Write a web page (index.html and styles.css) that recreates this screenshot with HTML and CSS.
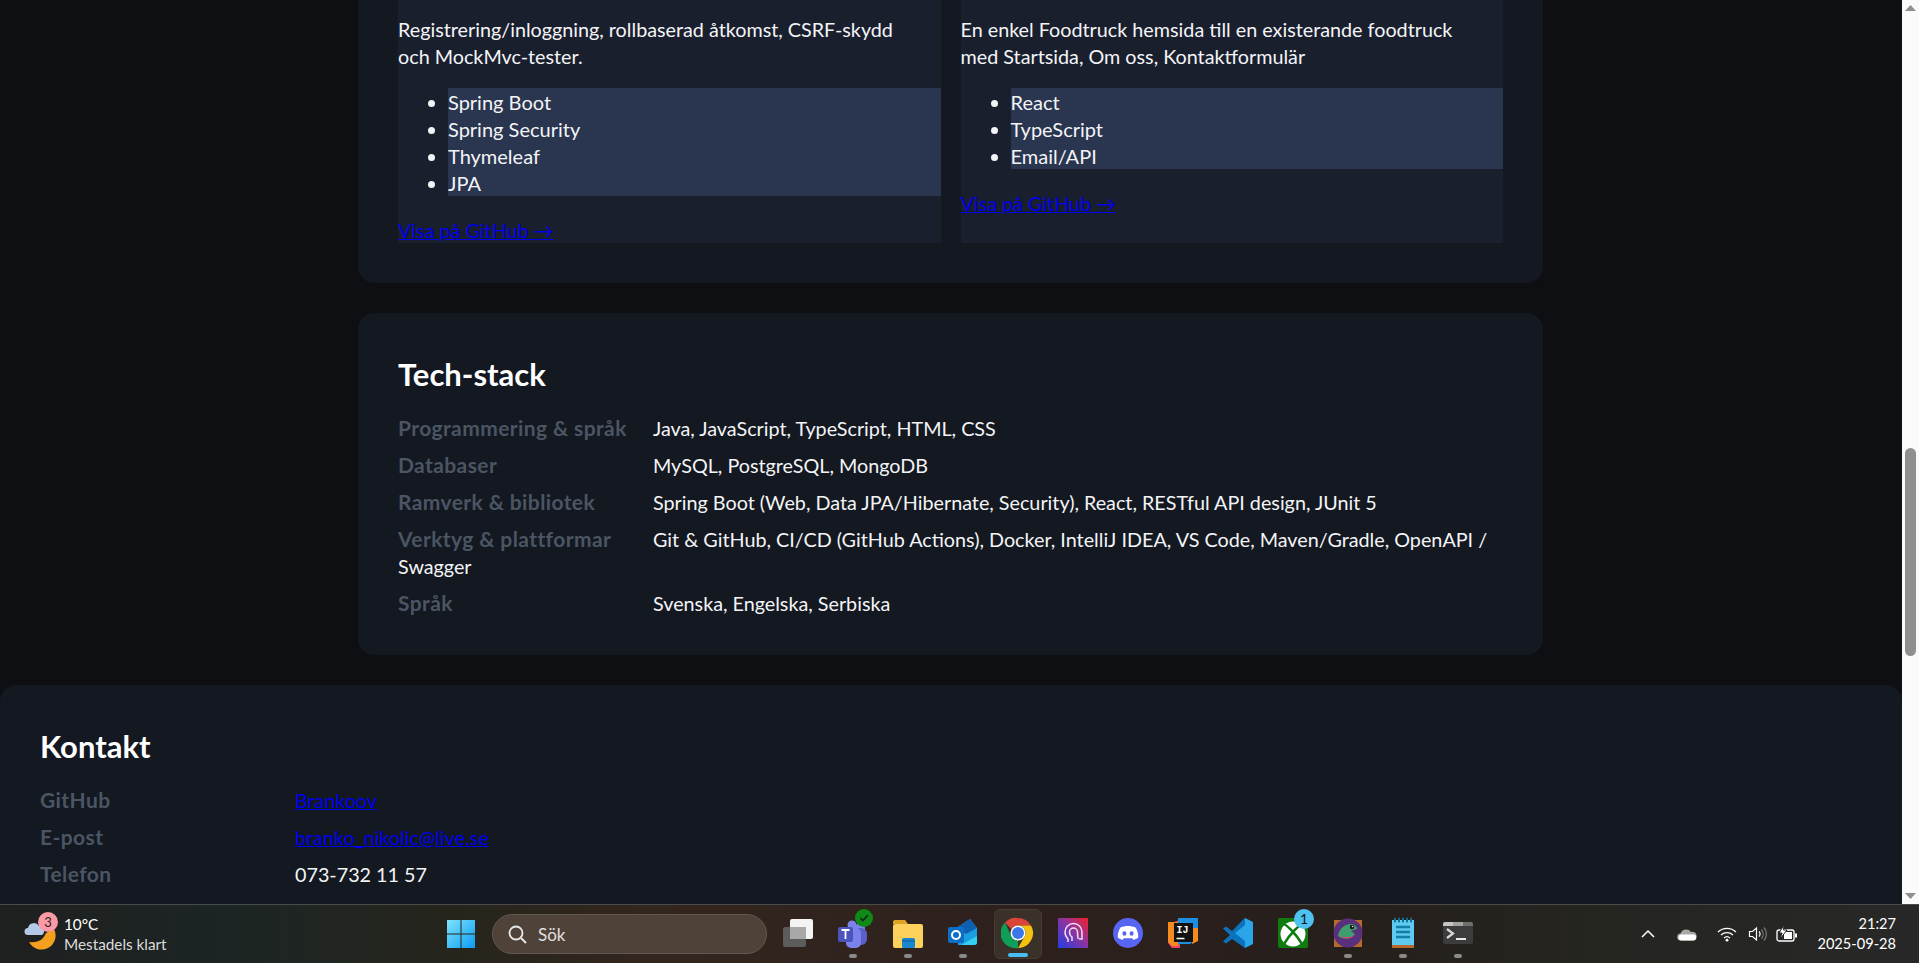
FILE: index.html
```html
<!DOCTYPE html>
<html lang="sv">
<head>
    <meta charset="UTF-8">
    <title>Portfolio</title>
    <link rel="stylesheet" href="styles.css">
</head>
<body>
    <div class="screen">
        <div class="page">
            <main class="content">
                <section class="card card-top">
                    <div class="projects">
                        <article class="project">
                            <p>Registrering/inloggning, rollbaserad åtkomst, CSRF-skydd och MockMvc-tester.</p>
                            <ul>
                                <li>Spring Boot</li>
                                <li>Spring Security</li>
                                <li>Thymeleaf</li>
                                <li>JPA</li>
                            </ul>
                            <a href="#">Visa på GitHub →</a>
                        </article>
                        <article class="project">
                            <p>En enkel Foodtruck hemsida till en existerande foodtruck med Startsida, Om oss, Kontaktformulär</p>
                            <ul>
                                <li>React</li>
                                <li>TypeScript</li>
                                <li>Email/API</li>
                            </ul>
                            <a href="#">Visa på GitHub →</a>
                        </article>
                    </div>
                </section>
                <section class="card">
                    <h2>Tech-stack</h2>
                    <div class="row"><span class="label">Programmering &amp; språk</span>Java, JavaScript, TypeScript, HTML, CSS</div>
                    <div class="row"><span class="label">Databaser</span>MySQL, PostgreSQL, MongoDB</div>
                    <div class="row"><span class="label">Ramverk &amp; bibliotek</span>Spring Boot (Web, Data JPA/Hibernate, Security), React, RESTful API design, JUnit 5</div>
                    <div class="row"><span class="label">Verktyg &amp; plattformar</span>Git &amp; GitHub, CI/CD (GitHub Actions), Docker, IntelliJ IDEA, VS Code, Maven/Gradle, OpenAPI / Swagger</div>
                    <div class="row"><span class="label">Språk</span>Svenska, Engelska, Serbiska</div>
                </section>
            </main>
            <footer class="contact">
                <h2>Kontakt</h2>
                <div class="row"><span class="label">GitHub</span><a href="#">Brankoov</a></div>
                <div class="row"><span class="label">E-post</span><a href="#">branko_nikolic@live.se</a></div>
                <div class="row"><span class="label">Telefon</span>073-732 11 57</div>
            </footer>
        </div>
        <div class="scrollbar">
            <svg class="arrow" viewBox="0 0 17 17"><path d="M8.5 5 14 11H3z"/></svg>
            <div class="track"><div class="thumb"></div></div>
            <svg class="arrow" viewBox="0 0 17 17"><path d="M3 6h11l-5.500 6z"/></svg>
        </div>
    </div>

    <div class="taskbar">
        <div class="weather">
            <div class="weather-icon">
                <svg viewBox="0 0 34 36" width="34" height="36">
                    <path d="M30 13a13.500 13.500 0 0 1-25 13c7 1 14-1 17-9z" fill="#f59f1f"/>
                    <path d="M4 19a3.500 3.500 0 0 1 0-7 6 6 0 0 1 11-2 5 5 0 0 1 3 9z" fill="#b4c8e8"/>
                </svg>
                <span class="badge-red">3</span>
            </div>
            <div>
                <div class="temp">10°C</div>
                <div class="sky">Mestadels klart</div>
            </div>
        </div>

        <div class="apps">
            <svg class="win" viewBox="0 0 30 30" width="30" height="30">
                <defs><linearGradient id="w" x1="0" y1="0" x2="1" y2="1"><stop offset="0" stop-color="#7fe3ff"/><stop offset="1" stop-color="#0c9df0"/></linearGradient></defs>
                <path d="M1 1h13.500v13.500H1zM15.500 1H29v13.500H15.500zM1 15.500h13.500V29H1zM15.500 15.500H29V29H15.500z" fill="url(#w)"/>
            </svg>
            <div class="search">
                <svg viewBox="0 0 20 20" width="20" height="20"><circle cx="9" cy="9" r="6.500" fill="none" stroke="#e8e8e8" stroke-width="1.800"/><path d="m14 14 5 5" stroke="#e8e8e8" stroke-width="2"/></svg>
                <span>Sök</span>
            </div>

            <div class="app">
                <svg viewBox="0 0 34 34"><rect x="2" y="11" width="23" height="20" rx="2" fill="#5c5c5c"/><rect x="9" y="3" width="23" height="20" rx="2" fill="#f4f4f4"/><rect x="9" y="11" width="16" height="12" fill="#a8a8a8"/></svg>
            </div>
            <div class="app open">
                <svg viewBox="0 0 34 34"><circle cx="24" cy="12" r="5" fill="#7b83eb"/><rect x="17" y="12" width="14" height="17" rx="6" fill="#5b5fc7"/><circle cx="16" cy="9" r="4.500" fill="#7b83eb"/><rect x="10" y="12" width="15" height="20" rx="5" fill="#7b83eb"/><rect x="2" y="11" width="15" height="15" rx="2" fill="#4b53bc"/><path d="M5.500 14h8M9.500 14v9" stroke="#fff" stroke-width="1.800"/></svg>
                <span class="badge-green"><svg viewBox="0 0 16 16" width="12" height="12"><path d="m3 8 3.500 3.500L13 4.500" fill="none" stroke="#10281a" stroke-width="2"/></svg></span>
            </div>
            <div class="app open">
                <svg viewBox="0 0 34 34"><path d="M2 6a2 2 0 0 1 2-2h10l3 4h-15z" fill="#e0a526"/><rect x="2" y="8" width="30" height="24" rx="2" fill="#fcd15c"/><rect x="11" y="22" width="13" height="10" rx="1.500" fill="#1a86d0"/><path d="M11 25h13" stroke="#0f5f9e" stroke-width="1"/></svg>
            </div>
            <div class="app open">
                <svg viewBox="0 0 34 34"><path d="M10 12 24 3l7 9v14a3 3 0 0 1-3 3H12z" fill="#1b9de2"/><path d="m24 3 7 9-11 6-10-6z" fill="#0f5fb0"/><path d="M15 29l16-9v6a3 3 0 0 1-3 3z" fill="#35d0f0"/><rect x="2" y="11" width="16" height="16" rx="2" fill="#0b6fc9"/><circle cx="10" cy="19" r="4" fill="none" stroke="#fff" stroke-width="2"/></svg>
            </div>
            <div class="app active">
                <svg viewBox="0 0 34 34"><path d="M17 2a15 15 0 0 1 13 7.500H17a7.500 7.500 0 0 0-6.500 3.800L4 6.500A15 15 0 0 1 17 2z" fill="#db4437"/><path d="M30 9.500A15 15 0 0 1 17 32l6.500-11.200A7.500 7.500 0 0 0 17 9.500z" fill="#f4c20d"/><path d="M4 6.500 10.500 20.800A7.500 7.500 0 0 0 17 24.500L17 32A15 15 0 0 1 4 6.500z" fill="#0f9d58"/><circle cx="17" cy="17" r="7.500" fill="#fff"/><circle cx="17" cy="17" r="6" fill="#3b78e7"/></svg>
            </div>
            <div class="app">
                <svg viewBox="0 0 34 34"><defs><linearGradient id="p" x1="0" y1="1" x2="1" y2="0"><stop offset="0" stop-color="#1f3fe6"/><stop offset=".55" stop-color="#8f339f"/><stop offset="1" stop-color="#f41f2a"/></linearGradient></defs><rect x="2" y="2" width="30" height="30" fill="url(#p)"/><path d="M12 26v-3c-2-2-3-4-3-7a8.500 8.500 0 0 1 17 0v7h-3" fill="none" stroke="#efe0f3" stroke-width="1.500"/><path d="M16 25v-4c-1.500-1-2.500-3-2.500-5a4 4 0 0 1 8 0c0 3 .5 5 .5 7" fill="none" stroke="#efe0f3" stroke-width="1.500"/></svg>
            </div>
            <div class="app">
                <svg viewBox="0 0 34 34"><circle cx="17" cy="17" r="15" fill="#5865f2"/><path d="M9.500 11.500c4.500-2 10.500-2 15 0 2 3 3 6.500 2.700 10-1.800 1.400-3.300 2-4.800 2.400l-1.200-1.700h-8.400l-1.200 1.700c-1.500-.4-3-1-4.800-2.400-.3-3.500.7-7 2.700-10z" fill="#fff"/><ellipse cx="13.400" cy="17.500" rx="2" ry="2.300" fill="#5865f2"/><ellipse cx="20.600" cy="17.500" rx="2" ry="2.300" fill="#5865f2"/></svg>
            </div>
            <div class="app">
                <svg viewBox="0 0 34 34"><path d="M2 8l12-4v28l-8 0-4-5z" fill="#f0426a"/><path d="M12 2h20v20l-8 6H12z" fill="#1e8fe0"/><path d="M2 6h10v24H6l-4-4z" fill="#f58a1f"/><path d="M26 12h6v13l-6 3z" fill="#f58a1f"/><rect x="8" y="7" width="19" height="19" fill="#111"/><text class="ij" x="10.500" y="16.500">IJ</text><path d="M10.500 22.500h8" stroke="#fff" stroke-width="1.500"/></svg>
            </div>
            <div class="app">
                <svg viewBox="0 0 34 34"><path d="M24 2 32 6v22l-8 4L9 18z" fill="#2ba5ea"/><path d="M24 2 11 15l-6-4.500-3 2 7 6.500-7 6.500 3 2 6-4.500 13 9V25L14 17 24 9z" fill="#0b72bd"/></svg>
            </div>
            <div class="app">
                <svg viewBox="0 0 34 34"><rect x="2" y="2" width="30" height="30" rx="2" fill="#107c10"/><circle cx="17" cy="18" r="12.500" fill="#fff"/><path d="M8 8c4 2 6 5 9 8 3 3 6 7 9 12M26 8c-4 2-6 5-9 8-3 3-6 7-9 12" fill="none" stroke="#107c10" stroke-width="2.500"/></svg>
                <span class="badge-blue">1</span>
            </div>
            <div class="app open">
                <svg viewBox="0 0 34 34"><rect x="3" y="4" width="28" height="27" fill="#b8692c"/><circle cx="17" cy="17" r="14.500" fill="#5a2f7c"/><path d="M7 20c1-7 6-12 13-12 3 0 6 2 6 5l-6 2 4 3c-4 6-12 6-17 2z" fill="#3f9e6f"/><circle cx="21" cy="11" r="2.200" fill="#111"/><circle cx="21.500" cy="10.500" r=".8" fill="#fff"/><path d="M8 19c4 3 10 3 15 0-2 4-11 5-15 0z" fill="#d8456f"/></svg>
            </div>
            <div class="app open">
                <svg viewBox="0 0 34 34"><rect x="6" y="4" width="22" height="26" fill="#5fc9ee"/><rect x="6" y="29" width="22" height="3" fill="#b8682a"/><path d="M9 2.500v3M13 2.500v3M17 2.500v3M21 2.500v3M25 2.500v3" stroke="#0f6f96" stroke-width="2" stroke-linecap="round"/><path d="M10 11h14M10 16h14M10 21h14" stroke="#0f7ea8" stroke-width="2.500"/></svg>
            </div>
            <div class="app open">
                <svg viewBox="0 0 34 34"><rect x="2" y="6" width="30" height="22" rx="2" fill="#3c3c3c"/><path d="M4 6h8v4H2V8a2 2 0 0 1 2-2z" fill="#c4c4c4"/><rect x="12" y="6" width="10" height="4" fill="#a2a2a2"/><path d="M22 6h8a2 2 0 0 1 2 2v2H22z" fill="#6f6f6f"/><path d="m6 13 6 4.500L6 22" fill="none" stroke="#d8d8d8" stroke-width="2.200"/><path d="M15 23h10" stroke="#e8e8e8" stroke-width="2"/></svg>
            </div>
        </div>

        <div class="tray">
            <svg viewBox="0 0 16 16" width="16" height="16"><path d="m2 11 6-6 6 6" fill="none" stroke="#fff" stroke-width="1.500"/></svg>
            <svg class="cloud" viewBox="0 0 22 16" width="22" height="16"><path d="M5 14.500a3.500 3.500 0 0 1-.5-7A6 6 0 0 1 15 6a4.300 4.300 0 0 1 2.500 8.500z" fill="#a8a8a8"/><path d="M5 14.500a3 3 0 0 1 1-6h11a3 3 0 0 1 .5 6z" fill="#fff"/></svg>
            <svg class="wifi" viewBox="0 0 20 16" width="20" height="16"><path d="M1 6a13 13 0 0 1 18 0M4 9a9 9 0 0 1 12 0M7 12a4.500 4.500 0 0 1 6 0" fill="none" stroke="#fff" stroke-width="1.300"/><circle cx="10" cy="14.200" r="1.400" fill="#fff"/></svg>
            <svg class="speaker" viewBox="0 0 20 16" width="20" height="16"><path d="M1.500 5.500h3l4-3.500v12l-4-3.500h-3z" fill="none" stroke="#fff" stroke-width="1.200"/><path d="M11 5.500a3.500 3.500 0 0 1 0 5" fill="none" stroke="#fff" stroke-width="1.200"/><path d="M13.500 3.500a7 7 0 0 1 0 9M16 1.500a10 10 0 0 1 0 13" fill="none" stroke="#777" stroke-width="1.200"/></svg>
            <svg class="battery" viewBox="0 0 22 18" width="22" height="18"><rect x="1" y="5" width="17" height="11" rx="2" fill="none" stroke="#fff" stroke-width="1.300"/><rect x="8" y="7" width="8" height="7" fill="#fff"/><rect x="19" y="8.500" width="2" height="4" fill="#fff"/><path d="M8 0 3 8h3l-2 6 7-9H7.500z" fill="#fff" stroke="#262626"/></svg>
            <div class="clock">
                <div>21:27</div>
                <div>2025-09-28</div>
            </div>
        </div>
    </div>
</body>
</html>
```

FILE: styles.css
```css
*{margin:0; padding:0; box-sizing:border-box;}
html,body{height:100%; overflow:hidden;}
body{
    font-family:Lato,"Open Sans",sans-serif;
    font-size:19.75px;
    line-height:27px;
    color:#f3f4f6;
    background:#0d0f12;
}

.screen{display:flex; height:904px;}
.page{flex:1; min-width:0; overflow:hidden; background:#0d0f12;}
.content{width:1185px; margin:0 0 0 358px;}

.card{
    background:#131821;
    border-radius:16px;
    padding:40px 40px 38px;
    margin-bottom:30px;
}
.card-top{padding:0 40px 40px; border-radius:0 0 16px 16px;}
h2{font-size:31px; line-height:42px; font-weight:700; color:#fff; margin-bottom:20px;}

.projects{display:grid; grid-template-columns:1fr 1fr; gap:20px; align-items:stretch;}
.project{background:#1a1f2e; padding-top:16px; height:243px;}
.project p{margin-bottom:18px; padding-right:12px;}
.project ul{padding-left:50px; margin-bottom:20px;}
.project li{background:#2a3550; height:27px; line-height:29px; font-size:20px;}
.project a{display:inline-block; line-height:29px;}
a{color:#0000ee; text-decoration:underline;}

.row{margin-bottom:10px;}
.row:last-child{margin-bottom:0;}
.label{display:inline-block; width:255px; font-size:21px; line-height:20px; letter-spacing:.4px; font-weight:700; color:#4b5563; white-space:nowrap;}

.contact{
    background:#131821;
    border-radius:16px;
    padding:40px;
    height:300px;
}

/* scrollbar */
.scrollbar{width:17px; background:#fafafa; display:flex; flex-direction:column;}
.arrow{width:17px; height:17px; fill:#8f8f8f;}
.track{flex:1; padding-top:431px;}
.thumb{width:11px; height:208px; margin:0 auto; background:#8f8f8f; border-radius:6px;}

/* taskbar */
.taskbar{
    height:59px;
    display:flex;
    align-items:center;
    position:relative;
    border-top:1px solid #4b4b4b;
    background:linear-gradient(90deg,#1f2020 0,#1c2524 12%,#26251c 24%,#33261e 34%,#2f211d 50%,#261f1c 70%,#252621 85%,#282828 100%);
    color:#fff;
}
.weather{display:flex; align-items:center; gap:6px; width:446px; padding-left:24px; font-size:15.300px; line-height:20px;}
.weather-icon{position:relative; width:34px; height:36px;}
.temp{color:#fff;}
.sky{color:#dcdcdc;}
.badge-red{
    position:absolute; top:-4px; left:14px;
    width:20px; height:20px; border-radius:50%;
    background:#fb9aa5; color:#222;
    font-size:13px; line-height:20px; text-align:center;
}

.apps{display:flex; align-items:center;}
.win{margin-right:16px;}
.search{
    display:flex; align-items:center; gap:11px;
    width:275px; height:40px; margin-right:7px;
    padding-left:14px;
    background:#4f4238;
    border:1px solid #62584f;
    border-radius:20px;
    font-size:17px;
    color:#e0e0e0;
}
.app{
    position:relative;
    width:48px; height:50px;
    margin-right:7px;
    display:flex; align-items:center; justify-content:center;
    border-radius:6px;
}
.app > svg{width:34px; height:34px; margin-bottom:2px;}
.ij{font-family:"Liberation Mono",monospace; font-size:10px; font-weight:700; fill:#fff;}
.app.active{background:#3a3129; border:1px solid #463c33;}
.app.open::after,.app.active::after{
    content:""; position:absolute; bottom:1px; left:50%;
    width:8px; height:4px; margin-left:-4px;
    background:#8a8a8a; border-radius:2px;
}
.app.active::after{width:20px; margin-left:-10px; background:#47bff2;}
.badge-green{
    position:absolute; top:0; right:4px;
    width:18px; height:18px; border-radius:50%;
    background:#0f8a16;
    display:flex; align-items:center; justify-content:center;
}
.badge-blue{
    position:absolute; top:0; right:3px;
    width:20px; height:20px; border-radius:50%;
    background:#4cc2f1; color:#111;
    font-size:14px; line-height:20px; text-align:center;
}

.tray{position:absolute; right:23px; top:0; height:58px; display:flex; align-items:center;}
.tray svg{margin-right:13px;}
.tray .cloud{margin:0 19px 0 7px;}
.tray .wifi{margin-right:11px;}
.tray .speaker{margin-right:8px;}
.tray .battery{margin:0 19px 0 0;}
.clock{font-size:14.600px; line-height:20px; text-align:right; color:#fff;}
```
